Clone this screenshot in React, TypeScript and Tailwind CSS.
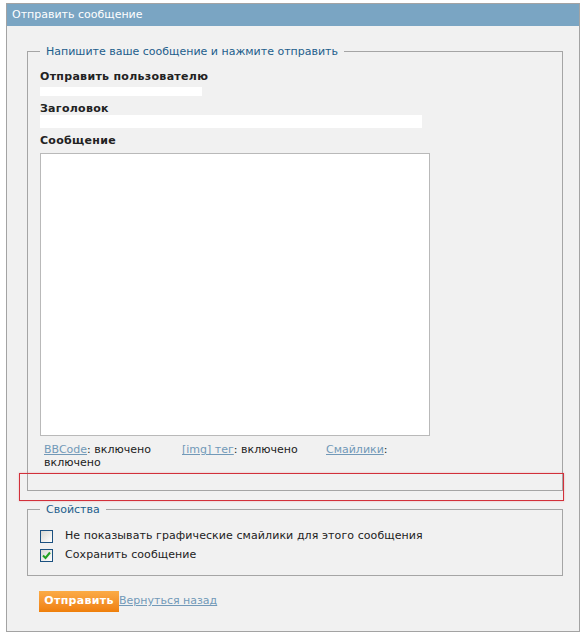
import React from "react";

const font = { fontFamily: '"DejaVu Sans", Verdana, sans-serif' };

function Check({ checked }: { checked?: boolean }) {
  return (
    <span className="flex h-[13px] w-[13px] shrink-0 items-center justify-center border border-[#1c5180] bg-gradient-to-br from-[#d8d8d2] to-white">
      {checked && (
        <svg width="9" height="9" viewBox="0 0 9 9">
          <path d="M1 4.5 L3.5 7 L8 1.5" fill="none" stroke="#21a121" strokeWidth="2" />
        </svg>
      )}
    </span>
  );
}

export default function App() {
  return (
    <div className="relative h-[634px] w-[584px] bg-white text-[11px] text-[#222]" style={font}>
      <div className="ml-[6px] w-[574px] pt-[3px]">
        <div className="border border-[#a3a3a3] bg-[#f1f1f1]">
          {/* Header */}
          <div className="flex h-[22px] items-center bg-[#7aa5c3] pl-[5px] text-white">
            Отправить сообщение
          </div>

          <div className="pb-[19px] pt-[19px]">
            {/* Message fieldset */}
            <fieldset className="ml-[20px] w-[536px] border border-[#a5a5a5] px-[12px] pb-[21px]">
              <legend className="px-[6px] leading-[13px] text-[#1d5e8c]">
                Напишите ваше сообщение и нажмите отправить
              </legend>
              <div className="mt-[13px] font-bold leading-[12px] tracking-[0.3px]">Отправить пользователю</div>
              <div className="mt-[4px] h-[9px] w-[162px] bg-white" />
              <div className="mt-[7px] font-bold leading-[12px] tracking-[0.3px]">Заголовок</div>
              <div className="h-[13px] w-[382px] bg-white" />
              <div className="mt-[7px] font-bold leading-[12px] tracking-[0.3px]">Сообщение</div>
              <div className="mt-[6px] h-[283px] w-[390px] border border-[#b9b9b9] bg-white" />
              <div className="mt-[7px] grid w-[380px] grid-cols-[138px_144px_1fr] pl-[4px] leading-[13px]">
                <span>
                  <span className="text-[#7299b8] underline">BBCode</span>: включено
                </span>
                <span>
                  <span className="text-[#7299b8] underline">[img] тег</span>: включено
                </span>
                <span>
                  <span className="text-[#7299b8] underline">Смайлики</span>:
                </span>
                <span>включено</span>
              </div>
            </fieldset>

            {/* Options fieldset */}
            <fieldset className="ml-[20px] mt-[12px] w-[536px] border border-[#a5a5a5] px-[12px] pb-[10px]">
              <legend className="px-[6px] leading-[13px] text-[#1d5e8c]">Свойства</legend>
              <div className="mt-[11px] flex h-[19px] items-center gap-[12px]">
                <Check />
                <span className="tracking-[0.08px]">Не показывать графические смайлики для этого сообщения</span>
              </div>
              <div className="flex h-[19px] items-center gap-[12px]">
                <Check checked />
                <span className="tracking-[0.08px]">Сохранить сообщение</span>
              </div>
            </fieldset>

            {/* Actions */}
            <div className="ml-[32px] mt-[15px] flex items-center">
              <button className="h-[21px] w-[80px] bg-gradient-to-b from-[#fbab45] to-[#ef7f08] font-bold tracking-[0.3px] text-white">
                Отправить
              </button>
              <span className="text-[#7299b8] underline">Вернуться назад</span>
            </div>
          </div>
        </div>
      </div>

      {/* Highlight overlay */}
      <div className="absolute left-[19px] top-[473px] h-[28px] w-[545px] border border-[#d2303a] shadow-[0_0_2px_rgba(210,48,58,0.3)]" />
    </div>
  );
}
